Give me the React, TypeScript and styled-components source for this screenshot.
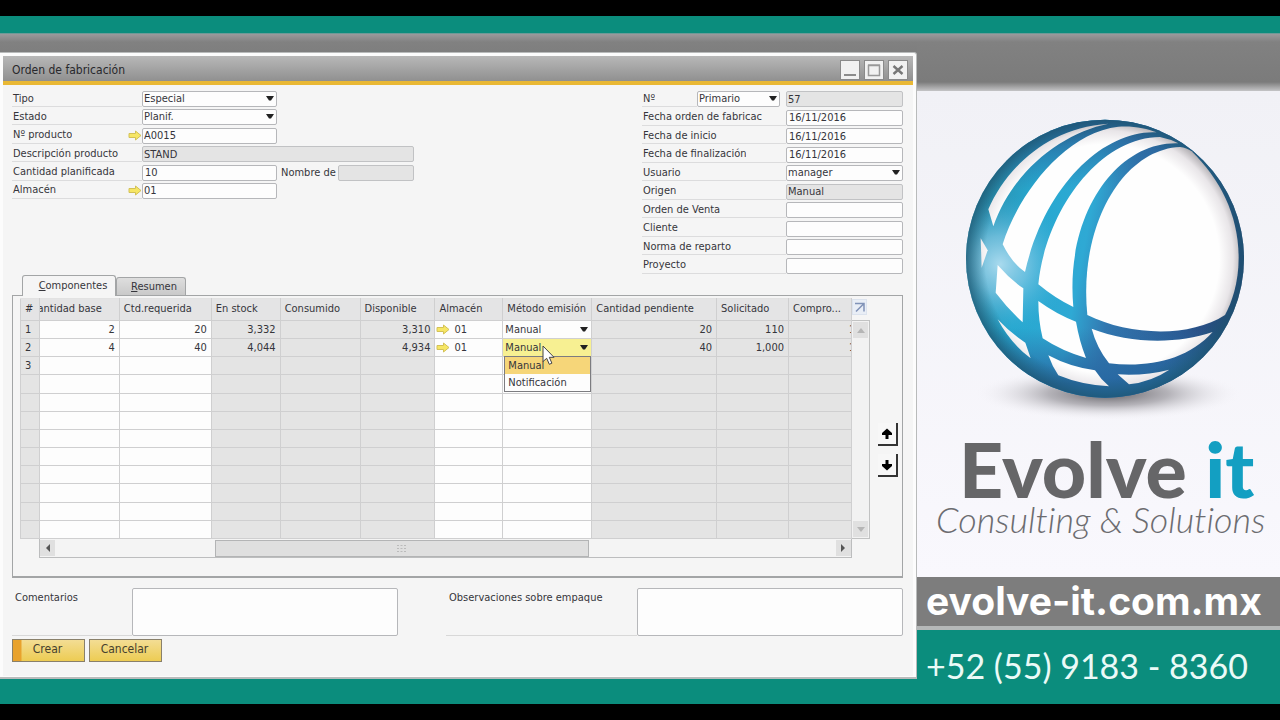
import React from "react";
import styled, { createGlobalStyle } from "styled-components";

const GlobalStyle = createGlobalStyle`
  *, *::before, *::after { box-sizing: border-box; }
  body { margin: 0; background: #000; }
  body, input, select, textarea, button, table {
    font-family: "DejaVu Sans Condensed", "Noto Sans", sans-serif;
    font-size: 11px;
    line-height: 14px;
    color: #35353b;
  }
`;

const Page = styled.div`
  min-height: 100vh;
  display: flex;
  flex-direction: column;
  padding: 16px 0;
  background: #000;
`;

const TopStripe = styled.div`
  height: 18px;
  background: #0b8d7d;
  border-bottom: 1px solid #6d9a97;
`;

const Stage = styled.div`
  flex: 1;
  display: grid;
  grid-template-columns: minmax(0, 1fr) 363px;
`;

const Desktop = styled.div`
  display: flex;
  flex-direction: column;
  padding: 18px 0 25px;
  background: linear-gradient(#9a9a9c 0, #818181 8px, #7b7b7b 30px, #0b8d7d 30px);
`;

const Window = styled.main`
  flex: 1;
  display: flex;
  flex-direction: column;
  border: 1px solid #b9bbbb;
  border-left: 0;
  border-bottom-width: 2px;
  border-radius: 0 3px 0 0;
  padding: 3px 3px 1px 3px;
  background: #fcfcfc;
`;

const TitleBar = styled.header`
  display: flex;
  align-items: center;
  justify-content: space-between;
  height: 29px;
  padding: 2px 5px 0 9px;
  border-bottom: 4px solid #e9b835;
  background: linear-gradient(#b8b8b8, #909090);
`;

const Title = styled.h1`
  margin: 0;
  font-size: 12px;
  line-height: 16px;
  font-weight: 400;
  color: #28282c;
`;

const WindowButtons = styled.div`
  display: flex;
  gap: 4px;
`;

const WindowButton = styled.button`
  width: 20px;
  height: 20px;
  padding: 0;
  border: 1px solid #8a8a8a;
  background: #f1f1f1;
  svg { display: block; }
`;

const Content = styled.div`
  flex: 1;
  padding: 6px 10px 13px 9px;
  background: #f5f5f5;
`;

const FormArea = styled.div`
  display: flex;
  justify-content: space-between;
  align-items: flex-start;
`;

const FieldColumn = styled.div<{ $width: number; $height: number }>`
  display: flex;
  flex-direction: column;
  justify-content: space-between;
  width: ${(p) => p.$width}px;
  height: ${(p) => p.$height}px;
`;

const FieldRow = styled.div`
  display: flex;
  align-items: stretch;
  height: 16px;
`;

const LabelCell = styled.div<{ $width: number }>`
  display: flex;
  align-items: center;
  justify-content: space-between;
  flex: none;
  width: ${(p) => p.$width}px;
  border-bottom: 1px solid #dcdcdd;
`;

const Label = styled.label<{ $clip?: boolean }>`
  padding-left: 1px;
  overflow: hidden;
  white-space: nowrap;
  width: ${(p) => (p.$clip ? "107px" : "auto")};
`;

const InlineLabel = styled.label`
  width: 61px;
  flex: none;
  padding-left: 4px;
  white-space: nowrap;
`;

const TextInput = styled.input<{ $indent?: boolean }>`
  flex: 1;
  min-width: 0;
  height: 16px;
  padding: 0 0 0 ${(p) => (p.$indent ? 2 : 1)}px;
  border: 1px solid #b6b7ba;
  border-radius: 2px;
  outline: 0;
  background: #fdfdfd;
  &:read-only { background: #e4e4e4; border-color: #c1c2c4; }
`;

const SelectBox = styled.div<{ $width?: number; $after?: number }>`
  position: relative;
  flex: ${(p) => (p.$width ? "none" : "1")};
  width: ${(p) => (p.$width ? p.$width + "px" : "auto")};
  margin-right: ${(p) => p.$after || 0}px;
  svg { position: absolute; right: 3px; top: 5px; pointer-events: none; }
`;

const Select = styled.select<{ $bare?: boolean }>`
  display: block;
  appearance: none;
  width: 100%;
  height: 16px;
  padding: 0 0 0 1px;
  border: ${(p) => (p.$bare ? "0" : "1px solid #b6b7ba")};
  border-radius: 2px;
  outline: 0;
  background: ${(p) => (p.$bare ? "transparent" : "#fdfdfd")};
`;

const Tabs = styled.div`
  display: flex;
  align-items: flex-end;
  padding: 1px 0 0 10px;
`;

const Tab = styled.button<{ $active?: boolean }>`
  position: relative;
  width: ${(p) => (p.$active ? 94 : 70)}px;
  height: ${(p) => (p.$active ? 21 : 18)}px;
  margin-bottom: ${(p) => (p.$active ? -1 : 0)}px;
  padding: ${(p) => (p.$active ? "0 0 0 8px" : "0 0 0 6px")};
  border: 1px solid #a3a5a6;
  border-bottom: 0;
  border-radius: 3px 3px 0 0;
  background: ${(p) => (p.$active ? "#f5f5f5" : "linear-gradient(#dedede, #c9c9c9)")};
  &::first-letter { text-decoration: underline; }
`;

const Panel = styled.section`
  display: flex;
  padding: 2px 4px 18px 7px;
  border: 1px solid #a3a5a6;
  border-bottom-width: 2px;
`;

const GridArea = styled.div`
  flex: 1;
  min-width: 0;
`;

const Table = styled.table`
  width: 100%;
  height: 241px;
  table-layout: fixed;
  border-collapse: collapse;
`;

const HeadCell = styled.th`
  height: 22px;
  padding: 0 0 2px;
  overflow: hidden;
  border: 1px solid #cfcfd0;
  border-top-color: #e2e2e2;
  background: #e4e4e5;
  font-weight: 400;
  text-align: left;
  white-space: nowrap;
`;

const HeadText = styled.div<{ $end?: boolean }>`
  display: flex;
  justify-content: ${(p) => (p.$end ? "flex-end" : "flex-start")};
  overflow: hidden;
  padding: ${(p) => (p.$end ? "0 17px 0 0" : "0 0 0 4px")};
`;

const Cell = styled.td<{ $shade?: boolean; $kind?: string; $lit?: boolean }>`
  position: relative;
  height: 18px;
  padding: 0 4px;
  border: 1px solid #cfcfd0;
  background: ${(p) => (p.$lit ? "#f7f092" : p.$shade ? "#e4e4e4" : "#fdfdfd")};
  text-align: ${(p) => (p.$kind === "number" ? "right" : "left")};
  white-space: nowrap;
  ${(p) => p.$kind === "cut" && "padding: 0 0 0 60px; overflow: hidden;"}
  ${(p) => p.$kind === "select" && "padding: 0 0 0 1px;"}
`;

const LinkValue = styled.div`
  display: flex;
  align-items: center;
  gap: 4px;
  margin-left: -3px;
`;

const Menu = styled.ul`
  position: absolute;
  z-index: 2;
  top: 17px;
  left: 1px;
  width: 87px;
  margin: 0;
  padding: 0;
  list-style: none;
  border: 1px solid #7c7c80;
  background: #fdfdfd;
`;

const MenuItem = styled.li<{ $active?: boolean }>`
  height: 17px;
  padding: 2px 0 0 3px;
  background: ${(p) => (p.$active ? "#f6d679" : "#fdfdfd")};
`;

const Pointer = styled.svg`
  position: absolute;
  z-index: 3;
  left: 39px;
  top: 6px;
`;

const HScroll = styled.div`
  display: grid;
  grid-template-columns: 15px 160fr 375fr 248fr 15px;
  align-items: center;
  height: 19px;
  margin-left: 19px;
  border: 1px solid #bcbdbe;
  border-top: 0;
  background: #f4f4f4;
`;

const ScrollButton = styled.button`
  display: grid;
  place-items: center;
  width: 15px;
  height: 16px;
  padding: 0;
  border: 0;
  background: #e0e0e0;
`;

const Thumb = styled.div`
  grid-column: 3;
  display: grid;
  place-items: center;
  height: 17px;
  border: 1px solid #b3b4b5;
  background: #dfdfdf;
`;

const ScrollRail = styled.div`
  width: 18px;
  display: flex;
  flex-direction: column;
`;

const ExpandButton = styled.button`
  display: grid;
  place-items: center;
  width: 15px;
  height: 16px;
  margin: 1px 0 5px;
  padding: 0;
  border: 1px solid #dce3ee;
  background: #e9eef6;
`;

const VScroll = styled.div`
  display: flex;
  flex-direction: column;
  justify-content: space-between;
  height: 219px;
  padding: 1px;
  border: 1px solid #c1c2c2;
  border-left: 0;
  background: #f2f2f2;
`;

const MoveButtons = styled.div`
  display: flex;
  flex-direction: column;
  gap: 8px;
  width: 28px;
  padding: 125px 0 0 8px;
`;

const MoveButton = styled.button`
  display: grid;
  place-items: center;
  width: 20px;
  height: 23px;
  padding: 0;
  border: 0;
  border-right: 2px solid #333;
  border-bottom: 2px solid #333;
  background: #f7f7f7;
`;

const Notes = styled.div`
  display: flex;
  justify-content: space-between;
  margin-top: 10px;
`;

const Note = styled.div<{ $label: number }>`
  display: grid;
  grid-template-columns: ${(p) => p.$label}px 266px;
  label {
    padding: 3px 0 0 3px;
    border-bottom: 1px solid #d8d8d8;
  }
`;

const NoteText = styled.textarea`
  height: 48px;
  resize: none;
  border: 1px solid #b6b7ba;
  border-radius: 2px;
  outline: 0;
  background: #fdfdfd;
`;

const Actions = styled.div`
  display: flex;
  gap: 4px;
  margin-top: 3px;
`;

const ActionButton = styled.button<{ $primary?: boolean }>`
  width: 73px;
  height: 23px;
  padding: 0 2px 3px 0;
  border: 1px solid #89806a;
  background: ${(p) =>
    p.$primary
      ? "linear-gradient(90deg, #e8a22d 8px, transparent 9px), linear-gradient(#f3dd94, #edcc53)"
      : "linear-gradient(#f3dd94, #edcc53)"};
  font-size: 12px;
  color: #45402e;
`;

const Brand = styled.aside`
  display: flex;
  flex-direction: column;
  min-width: 0;
  overflow: hidden;
  background: #0b8d7d;
`;

const BrandTop = styled.div`
  height: 57px;
  background: linear-gradient(#9a9a9c 0, #818181 8px, #7b7b7b 48px, #c4c4c6);
`;

const BrandBody = styled.div`
  flex: 1;
  display: flex;
  flex-direction: column;
  padding-left: 13px;
  background: linear-gradient(#f1f1f6, #f9f8fd);
  svg { display: block; flex: none; }
`;

const BrandName = styled.div`
  margin-top: 9px;
  padding-left: 29px;
  font: 900 77px/76px Lato, sans-serif;
  color: #666668;
  white-space: nowrap;
  span { color: #139fc2; }
`;

const BrandTagline = styled.div`
  margin-top: -7px;
  padding-left: 6px;
  font: italic 300 36px/40px Lato, sans-serif;
  font-variant-ligatures: none;
  color: #6c6c70;
  white-space: nowrap;
`;

const BrandLink = styled.a`
  height: 53px;
  padding-left: 9px;
  border-bottom: 4px solid #b5b8b8;
  background: #7d7d7d;
  font: 700 39px/48px Inter, sans-serif;
  color: #fff;
  text-decoration: none;
  white-space: nowrap;
`;

const BrandPhone = styled.div`
  height: 74px;
  padding: 12px 0 0 9px;
  font: 400 34px/48px Lato, sans-serif;
  color: #eafaf7;
  white-space: nowrap;
`;

const Caret = () => (
  <svg width="8" height="5" viewBox="0 0 8 5" aria-hidden="true">
    <path d="M0 0h8L5 4.500h-2z" fill="#222" />
  </svg>
);

const LinkArrow = () => (
  <svg width="14" height="11" viewBox="0 0 14 11" aria-hidden="true">
    <path d="M1 3.500h6.500V1L13 5.500 7.500 10V7.500H1z" fill="#f6e664" stroke="#d3c157" />
  </svg>
);

const Triangle = ({ dir, color }: { dir: "up" | "down" | "left" | "right"; color: string }) => {
  const paths = {
    up: "M1 8 5 3l4 5z",
    down: "M1 3h8L5 8z",
    left: "M7 1v8L3 5z",
    right: "M3 1v8l4-4z",
  };
  return (
    <svg width="10" height="10" viewBox="0 0 10 10" aria-hidden="true">
      <path d={paths[dir]} fill={color} />
    </svg>
  );
};

const MoveArrow = ({ down }: { down?: boolean }) => (
  <svg width="12" height="12" viewBox="0 0 12 12" aria-hidden="true">
    <path d={down ? "M4.500 1h3v4H11v2L6 11.500 1 7V5h3.500z" : "M4.500 11h3V7H11V5L6 .5 1 5v2h3.500z"} fill="#000" />
  </svg>
);

const Globe = () => (
  <svg width="350" height="330" viewBox="0 0 1050 990" role="img" aria-label="Evolve it">
    <defs>
      <linearGradient id="base" gradientUnits="userSpaceOnUse" x1="110" y1="420" x2="940" y2="580">
        <stop offset="0" stopColor="#2c8aa6" />
        <stop offset="0.22" stopColor="#27a8d0" />
        <stop offset="0.42" stopColor="#2fa9d4" />
        <stop offset="0.55" stopColor="#3277b0" />
        <stop offset="0.8" stopColor="#2b5b94" />
        <stop offset="1" stopColor="#263f72" />
      </linearGradient>
      <linearGradient id="poles" gradientUnits="userSpaceOnUse" x1="0" y1="86" x2="0" y2="920">
        <stop offset="0" stopColor="#2a5c92" />
        <stop offset="0.25" stopColor="#2a6fa6" stopOpacity="0" />
        <stop offset="0.75" stopColor="#2a6fa6" stopOpacity="0" />
        <stop offset="0.95" stopColor="#2868a2" />
      </linearGradient>
      <radialGradient id="glow" gradientUnits="userSpaceOnUse" cx="210" cy="520" r="210">
        <stop offset="0" stopColor="#a9daee" />
        <stop offset="0.4" stopColor="#86cae6" stopOpacity="0.7" />
        <stop offset="1" stopColor="#39add6" stopOpacity="0" />
      </radialGradient>
      <radialGradient id="rim" gradientUnits="userSpaceOnUse" cx="525" cy="503" r="418">
        <stop offset="0.86" stopColor="#1c5f78" stopOpacity="0" />
        <stop offset="1" stopColor="#1c5570" stopOpacity="0.75" />
      </radialGradient>
      <radialGradient id="pane" gradientUnits="userSpaceOnUse" cx="525" cy="503" r="418">
        <stop offset="0.82" stopColor="#fefefe" />
        <stop offset="0.92" stopColor="#e8e5e8" />
        <stop offset="1" stopColor="#a9a6aa" />
      </radialGradient>
      <radialGradient id="shadow">
        <stop offset="0" stopColor="#5f5d62" />
        <stop offset="0.45" stopColor="#98969c" stopOpacity="0.7" />
        <stop offset="1" stopColor="#f5f4f9" stopOpacity="0" />
      </radialGradient>
    </defs>
    <ellipse cx="535" cy="908" rx="400" ry="80" fill="url(#shadow)" />
    <circle cx="525" cy="503" r="417" fill="url(#base)" />
    <circle cx="525" cy="503" r="417" fill="url(#poles)" />
    <circle cx="525" cy="503" r="417" fill="url(#glow)" />
    <circle cx="525" cy="503" r="417" fill="url(#rim)" />
    <g fill="url(#pane)">
      <path d="M175 355C225 240 345 110 535 98C400 125 250 235 190 406Z" />
      <path d="M218 460C260 320 400 125 565 107C610 104 650 112 680 124C525 115 345 280 285 543Q245 515 218 460Z" />
      <path d="M325 580C345 370 500 140 690 138Q720 144 745 157C560 150 405 370 430 648Q375 622 325 580Z" />
      <path d="M472 672C445 400 580 175 750 168Q770 170 785 181C870 265 925 370 926 500C926 575 905 635 885 672C780 740 600 735 472 672Z" />
      <path d="M152 442L173 478L155 530Z" />
      <path d="M203 522Q240 565 280 592L278 694Q235 655 197 605Z" />
      <path d="M325 630Q380 670 438 692Q448 750 468 801Q395 780 338 742Q325 690 325 630Z" />
      <path d="M485 713C600 758 740 760 848 723C770 810 650 830 537 817Q500 770 485 713Z" />
      <path d="M203 685Q240 725 286 755L302 802Q240 755 203 685Z" />
      <path d="M355 793Q420 828 495 838Q512 865 537 886Q455 882 385 853Q366 825 355 793Z" />
      <path d="M563 850Q645 855 718 836Q665 872 597 880Z" />
    </g>
  </svg>
);

type Field = {
  id: string;
  label: string;
  value?: string;
  kind?: "select" | "readonly";
  link?: boolean;
  indent?: boolean;
  wide?: boolean;
  clip?: boolean;
  extra?: string;
  prefix?: string;
};

const leftFields: Field[] = [
  { id: "tipo", label: "Tipo", value: "Especial", kind: "select" },
  { id: "estado", label: "Estado", value: "Planif.", kind: "select" },
  { id: "producto", label: "Nº producto", value: "A0015", link: true },
  { id: "descripcion", label: "Descripción producto", value: "STAND", kind: "readonly", wide: true, clip: true },
  { id: "cantidad", label: "Cantidad planificada", value: "10", indent: true, extra: "Nombre de" },
  { id: "almacen", label: "Almacén", value: "01", link: true },
];

const rightFields: Field[] = [
  { id: "numero", label: "Nº", value: "57", kind: "readonly", prefix: "Primario" },
  { id: "fecha-orden", label: "Fecha orden de fabricac", value: "16/11/2016", indent: true },
  { id: "fecha-inicio", label: "Fecha de inicio", value: "16/11/2016", indent: true },
  { id: "fecha-fin", label: "Fecha de finalización", value: "16/11/2016", indent: true },
  { id: "usuario", label: "Usuario", value: "manager", kind: "select" },
  { id: "origen", label: "Origen", value: "Manual", kind: "readonly" },
  { id: "venta", label: "Orden de Venta" },
  { id: "cliente", label: "Cliente" },
  { id: "norma", label: "Norma de reparto" },
  { id: "proyecto", label: "Proyecto" },
];

const FieldControl = ({ field }: { field: Field }) =>
  field.kind === "select" ? (
    <SelectBox>
      <Select id={field.id} defaultValue={field.value}>
        <option>{field.value}</option>
      </Select>
      <Caret />
    </SelectBox>
  ) : (
    <TextInput id={field.id} defaultValue={field.value} readOnly={field.kind === "readonly"} $indent={field.indent} />
  );

const LeftControls = styled.div<{ $wide?: boolean }>`
  display: flex;
  flex: none;
  width: ${(p) => (p.$wide ? 272 : 135)}px;
`;

const ExtraControls = styled.div`
  display: flex;
  flex: none;
  align-items: center;
  width: 137px;
`;

const columns = [
  { title: "#", width: 19 },
  { title: "antidad base", width: 80 },
  { title: "Ctd.requerida", width: 92 },
  { title: "En stock", width: 69, shade: true },
  { title: "Consumido", width: 80, shade: true },
  { title: "Disponible", width: 75, shade: true },
  { title: "Almacén", width: 68 },
  { title: "Método emisión", width: 89 },
  { title: "Cantidad pendiente", width: 125, shade: true },
  { title: "Solicitado", width: 72, shade: true },
  { title: "Compro...", width: 63, shade: true },
];

const rows = [
  ["1", "2", "20", "3,332", "", "3,310", "01", "Manual", "20", "110", "1"],
  ["2", "4", "40", "4,044", "", "4,934", "01", "Manual", "40", "1,000", "1"],
  ["3"],
  ...Array.from({ length: 9 }, () => [] as string[]),
];

const GridCell = ({ row, col }: { row: number; col: number }) => {
  const value = rows[row][col] || "";
  const shade = col === 0 || columns[col].shade;
  if (col === 7 && value) {
    const open = row === 1;
    return (
      <Cell $kind="select" $lit={open}>
        <SelectBox>
          <Select $bare aria-label={`Método emisión ${row + 1}`} defaultValue="Manual">
            <option>Manual</option>
            <option>Notificación</option>
          </Select>
          <Caret />
        </SelectBox>
        {open && (
          <>
            <Menu role="listbox" aria-label="Método emisión">
              <MenuItem role="option" aria-selected $active>Manual</MenuItem>
              <MenuItem role="option" aria-selected={false}>Notificación</MenuItem>
            </Menu>
            <Pointer width="13" height="21" viewBox="0 0 13 21" aria-hidden="true">
              <path d="M1 1v15.500l3.700-3.200 2.600 6 2.600-1.100-2.600-5.900h4.700z" fill="#fff" stroke="#444" />
            </Pointer>
          </>
        )}
      </Cell>
    );
  }
  if (col === 6 && value) {
    return (
      <Cell>
        <LinkValue><LinkArrow />{value}</LinkValue>
      </Cell>
    );
  }
  const kind = col === 0 || col === 6 ? undefined : col === 10 ? "cut" : "number";
  return <Cell $shade={shade} $kind={kind}>{value}</Cell>;
};

export default function App() {
  return (
    <Page>
      <GlobalStyle />
      <TopStripe />
      <Stage>
        <Desktop>
          <Window>
            <TitleBar>
              <Title>Orden de fabricación</Title>
              <WindowButtons>
                <WindowButton aria-label="Minimizar">
                  <svg width="18" height="18"><path d="M3 14h12" stroke="#8b8b8b" strokeWidth="2" /></svg>
                </WindowButton>
                <WindowButton aria-label="Maximizar">
                  <svg width="18" height="18"><path d="M3.500 4.500h11v10h-11zM3 4h12" fill="none" stroke="#999" strokeWidth="1.500" /></svg>
                </WindowButton>
                <WindowButton aria-label="Cerrar">
                  <svg width="18" height="18"><path d="M4.500 5l9 8M13.500 5l-9 8" stroke="#777" strokeWidth="2.400" /></svg>
                </WindowButton>
              </WindowButtons>
            </TitleBar>
            <Content>
              <FormArea>
                <FieldColumn $width={402} $height={108}>
                  {leftFields.map((f) => (
                    <FieldRow key={f.id}>
                      <LabelCell $width={130}>
                        <Label htmlFor={f.id} $clip={f.clip}>{f.label}</Label>
                        {f.link && <LinkArrow />}
                      </LabelCell>
                      <LeftControls $wide={f.wide}><FieldControl field={f} /></LeftControls>
                      {f.extra && (
                        <ExtraControls>
                          <InlineLabel htmlFor="nombre">{f.extra}</InlineLabel>
                          <TextInput id="nombre" readOnly />
                        </ExtraControls>
                      )}
                    </FieldRow>
                  ))}
                </FieldColumn>
                <FieldColumn $width={261} $height={183}>
                  {rightFields.map((f) => (
                    <FieldRow key={f.id}>
                      <LabelCell $width={f.prefix ? 55 : 144}>
                        <Label htmlFor={f.id}>{f.label}</Label>
                      </LabelCell>
                      {f.prefix && (
                        <SelectBox $width={83} $after={6}>
                          <Select aria-label="Serie" defaultValue={f.prefix}>
                            <option>{f.prefix}</option>
                          </Select>
                          <Caret />
                        </SelectBox>
                      )}
                      <FieldControl field={f} />
                    </FieldRow>
                  ))}
                </FieldColumn>
              </FormArea>
              <Tabs role="tablist">
                <Tab role="tab" aria-selected $active>Componentes</Tab>
                <Tab role="tab" aria-selected={false}>Resumen</Tab>
              </Tabs>
              <Panel>
                <GridArea>
                  <Table>
                    <colgroup>
                      {columns.map((c) => <col key={c.title} style={{ width: `${(c.width / 832) * 100}%` }} />)}
                    </colgroup>
                    <thead>
                      <tr>
                        {columns.map((c, i) => (
                          <HeadCell key={c.title}><HeadText $end={i === 1}>{c.title}</HeadText></HeadCell>
                        ))}
                      </tr>
                    </thead>
                    <tbody>
                      {rows.map((_, r) => (
                        <tr key={r}>
                          {columns.map((c, i) => <GridCell key={c.title} row={r} col={i} />)}
                        </tr>
                      ))}
                    </tbody>
                  </Table>
                  <HScroll>
                    <ScrollButton aria-label="Desplazar a la izquierda"><Triangle dir="left" color="#555" /></ScrollButton>
                    <Thumb>
                      <svg width="9" height="7" viewBox="0 0 9 7" aria-hidden="true">
                        <path d="M0 .5h9M0 3.500h9M0 6.500h9" stroke="#bbb" strokeDasharray="2 1.500" />
                      </svg>
                    </Thumb>
                    <span />
                    <ScrollButton aria-label="Desplazar a la derecha"><Triangle dir="right" color="#555" /></ScrollButton>
                  </HScroll>
                </GridArea>
                <ScrollRail>
                  <ExpandButton aria-label="Ampliar">
                    <svg width="13" height="13" viewBox="0 0 13 13"><path d="M2 2.500h9v8M11 2.500l-8 8" fill="none" stroke="#8193b8" strokeWidth="1.500" /></svg>
                  </ExpandButton>
                  <VScroll>
                    <ScrollButton aria-label="Desplazar arriba"><Triangle dir="up" color="#b5b5b5" /></ScrollButton>
                    <ScrollButton aria-label="Desplazar abajo"><Triangle dir="down" color="#b5b5b5" /></ScrollButton>
                  </VScroll>
                </ScrollRail>
                <MoveButtons>
                  <MoveButton aria-label="Subir"><MoveArrow /></MoveButton>
                  <MoveButton aria-label="Bajar"><MoveArrow down /></MoveButton>
                </MoveButtons>
              </Panel>
              <Notes>
                <Note $label={120}>
                  <label htmlFor="comentarios">Comentarios</label>
                  <NoteText id="comentarios" />
                </Note>
                <Note $label={191}>
                  <label htmlFor="observaciones">Observaciones sobre empaque</label>
                  <NoteText id="observaciones" />
                </Note>
              </Notes>
              <Actions>
                <ActionButton $primary>Crear</ActionButton>
                <ActionButton>Cancelar</ActionButton>
              </Actions>
            </Content>
          </Window>
        </Desktop>
        <Brand>
          <BrandTop />
          <BrandBody>
            <Globe />
            <BrandName>Evolve <span>it</span></BrandName>
            <BrandTagline>Consulting &amp; Solutions</BrandTagline>
          </BrandBody>
          <BrandLink href="#">evolve-it.com.mx</BrandLink>
          <BrandPhone>+52 (55) 9183 - 8360</BrandPhone>
        </Brand>
      </Stage>
    </Page>
  );
}
